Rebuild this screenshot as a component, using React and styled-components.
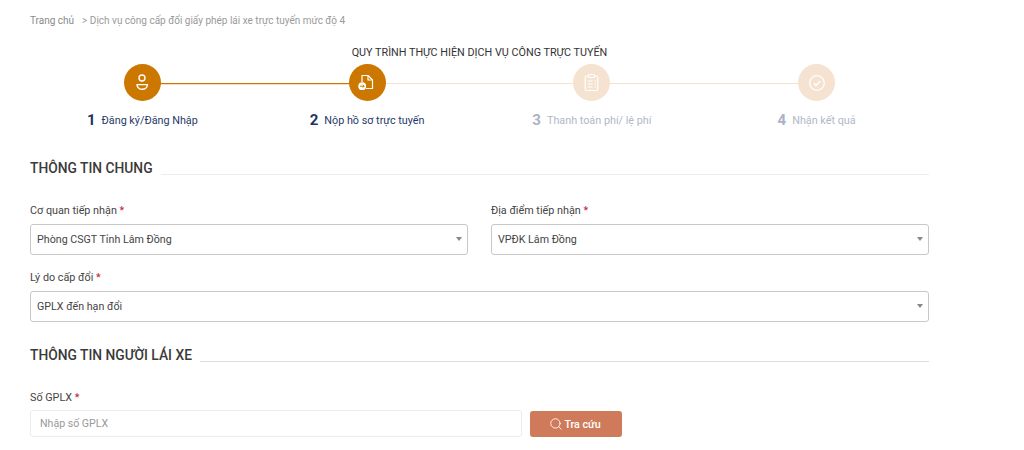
import styled, { createGlobalStyle } from 'styled-components';
import { Search } from 'lucide-react';

const GlobalStyle = createGlobalStyle`
    html, body {
        margin: 0;
        padding: 0;
        background: #fff;
        overflow: hidden;
    }
    * {
        box-sizing: border-box;
    }
`;

const Page = styled.div`
    width: 1024px;
    height: 450px;
    padding: 15px 95px 0 30px;
    font-family: Roboto, "Liberation Sans", sans-serif;
    overflow: hidden;
`;

const Breadcrumb = styled.div`
    display: flex;
    height: 12px;
    line-height: 12px;
    font-size: 10px;
    color: #8a8a8a;
    & span {
        margin-left: 8px;
        color: #9a9a9a;
    }
`;

const ProcessTitle = styled.div`
    margin-top: 19px;
    text-align: center;
    font-size: 10.8px;
    line-height: 14px;
    color: #333;
`;

const Steps = styled.div`
    display: grid;
    grid-template-columns: repeat(4, 1fr);
    margin-top: 4px;
`;

const Step = styled.div`
    position: relative;
    display: flex;
    flex-direction: column;
    align-items: center;

    &:not(:last-child)::after {
        content: "";
        position: absolute;
        top: 19px;
        left: 50%;
        width: 100%;
        height: 1px;
        background: ${(p) => (p.$lineOn ? '#cc7700' : '#f5e2d0')};
        box-shadow: ${(p) => (p.$lineOn ? '0 1px 0 #f3dcc0' : 'none')};
    }
`;

const Circle = styled.div`
    position: relative;
    z-index: 1;
    width: 37px;
    height: 37px;
    border-radius: 50%;
    display: flex;
    align-items: center;
    justify-content: center;
    background: ${(p) => (p.$on ? '#cc7700' : '#f5e2d0')};
`;

const StepLabel = styled.div`
    display: flex;
    align-items: center;
    height: 20px;
    margin-top: 9px;
    font-size: 10.8px;
    color: ${(p) => (p.$on ? '#1f3a68' : '#b0b8c8')};
`;

const StepNumber = styled.span`
    font-size: 15px;
    font-weight: 700;
    margin-right: 6px;
    color: ${(p) => (p.$on ? '#1c3461' : '#a9b3c6')};
`;

const SectionHead = styled.div`
    display: flex;
    align-items: flex-end;
    margin-top: ${(p) => p.$top}px;
    gap: 8px;
`;

const SectionTitle = styled.div`
    font-size: 13.8px;
    line-height: 17px;
    font-weight: 500;
    color: #3a3a3a;
    white-space: nowrap;
`;

const SectionLine = styled.div`
    flex: 1;
    height: 1px;
    margin-bottom: 2px;
    background: ${(p) => (p.$dark ? '#dcdcdc' : '#ececec')};
`;

const Row = styled.div`
    display: grid;
    grid-template-columns: ${(p) => (p.$two ? '438px 438px' : '1fr')};
    justify-content: space-between;
    margin-top: ${(p) => p.$top}px;
`;

const Label = styled.div`
    font-size: 10.8px;
    line-height: 14px;
    height: 14px;
    margin-bottom: ${(p) => (p.$tight ? 5 : 6)}px;
    color: #444;
    & b {
        font-weight: 400;
        color: #c0202a;
    }
`;

const SelectWrap = styled.div`
    position: relative;
    height: 31px;

    &::after {
        content: "";
        position: absolute;
        top: 13px;
        right: 6px;
        border-left: 3px solid transparent;
        border-right: 3px solid transparent;
        border-top: 4px solid #888;
    }
`;

const Select = styled.select`
    appearance: none;
    width: 100%;
    height: 100%;
    padding: 0 20px 0 6px;
    border: 1px solid #c8c8c8;
    border-radius: 3px;
    background: #fff;
    font-family: inherit;
    font-size: 10.7px;
    color: #444;
    outline: none;
`;

const SearchRow = styled.div`
    display: flex;
    align-items: flex-start;
    gap: 8px;
`;

const Input = styled.input`
    width: 492px;
    height: 27px;
    padding: 0 9px;
    border: 1px solid #ececec;
    border-radius: 3px;
    font-family: inherit;
    font-size: 10.6px;
    color: #444;
    outline: none;
    &::placeholder {
        color: #999;
        opacity: 1;
    }
`;

const Button = styled.button`
    display: flex;
    align-items: center;
    justify-content: center;
    gap: 1px;
    width: 92px;
    height: 26px;
    margin-top: 1px;
    padding: 0 2px 0 0;
    border: 0;
    border-radius: 3px;
    background: #cf7a5a;
    color: #fff;
    font-family: inherit;
    font-size: 10.7px;
    font-weight: 500;
`;

const UserIcon = () => (
    <svg width="17" height="17" viewBox="0 0 17 17" fill="none" stroke="#fff" strokeWidth="1.4">
        <circle cx="8" cy="4" r="3" />
        <path d="M3 10.600h10.400c0 2.600-2.300 4.700-5.200 4.700S3 13.200 3 10.600z" />
    </svg>
);

const FileIcon = () => (
    <svg width="20" height="20" viewBox="0 0 20 20" fill="none">
        <path d="M5 9V2.500h6l4.500 4.500v8.500H9" stroke="#fff" strokeWidth="1.200" strokeLinejoin="round" />
        <path d="M11 2.500V7h4.500" stroke="#fff" strokeWidth="1.200" strokeLinejoin="round" />
        <circle cx="5.200" cy="13.200" r="3.900" fill="#fff" />
        <path d="M3 13.200h4.200M5.800 11.800l1.400 1.400-1.400 1.400" stroke="#cc7700" strokeWidth="1" />
    </svg>
);

const ClipboardIcon = () => (
    <svg width="17" height="19" viewBox="0 0 17 19" fill="none" stroke="#fff" strokeWidth="1.200">
        <rect x="2.200" y="3" width="12.600" height="14.500" rx="1.500" />
        <rect x="5.500" y="1.500" width="6" height="3" rx="1" fill="#f5e2d0" />
        <path d="M4.500 8h5M11.500 8h1.500M4.500 11h5M11.500 11h1.500M4.500 14h5M11.500 14h1.500" />
    </svg>
);

const CheckIcon = () => (
    <svg width="18" height="18" viewBox="0 0 18 18" fill="none" stroke="#fff" strokeWidth="1.300">
        <circle cx="9" cy="9" r="7.300" />
        <path d="M5.800 9.300l2.200 2.100 4.200-4.300" strokeWidth="1.500" />
    </svg>
);

const steps = [
    { n: 1, text: 'Đăng ký/Đăng Nhập', icon: <UserIcon />, on: true, lineOn: true },
    { n: 2, text: 'Nộp hồ sơ trực tuyến', icon: <FileIcon />, on: true },
    { n: 3, text: 'Thanh toán phí/ lệ phí', icon: <ClipboardIcon /> },
    { n: 4, text: 'Nhận kết quả', icon: <CheckIcon /> },
];

const App = () => {
    return (
        <Page>
            <GlobalStyle />
            <Breadcrumb>
                Trang chủ <span>&gt; Dịch vụ công cấp đổi giấy phép lái xe trực tuyến mức độ 4</span>
            </Breadcrumb>
            <ProcessTitle>QUY TRÌNH THỰC HIỆN DỊCH VỤ CÔNG TRỰC TUYẾN</ProcessTitle>
            <Steps>
                {steps.map((s) => (
                    <Step key={s.n} $lineOn={s.lineOn}>
                        <Circle $on={s.on}>{s.icon}</Circle>
                        <StepLabel $on={s.on}>
                            <StepNumber $on={s.on}>{s.n}</StepNumber>
                            {s.text}
                        </StepLabel>
                    </Step>
                ))}
            </Steps>

            <SectionHead $top={30}>
                <SectionTitle>THÔNG TIN CHUNG</SectionTitle>
                <SectionLine />
            </SectionHead>
            <Row $two $top={27}>
                <div>
                    <Label>Cơ quan tiếp nhận <b>*</b></Label>
                    <SelectWrap>
                        <Select defaultValue="a"><option value="a">Phòng CSGT Tỉnh Lâm Đồng</option></Select>
                    </SelectWrap>
                </div>
                <div>
                    <Label>Địa điểm tiếp nhận <b>*</b></Label>
                    <SelectWrap>
                        <Select defaultValue="a"><option value="a">VPĐK Lâm Đồng</option></Select>
                    </SelectWrap>
                </div>
            </Row>
            <Row $top={16}>
                <div>
                    <Label>Lý do cấp đổi <b>*</b></Label>
                    <SelectWrap>
                        <Select defaultValue="a"><option value="a">GPLX đến hạn đổi</option></Select>
                    </SelectWrap>
                </div>
            </Row>

            <SectionHead $top={25}>
                <SectionTitle>THÔNG TIN NGƯỜI LÁI XE</SectionTitle>
                <SectionLine $dark />
            </SectionHead>
            <Row $top={27}>
                <div>
                    <Label $tight>Số GPLX <b>*</b></Label>
                    <SearchRow>
                        <Input placeholder="Nhập số GPLX" />
                        <Button><Search size={14} strokeWidth={1.5} /> Tra cứu</Button>
                    </SearchRow>
                </div>
            </Row>
        </Page>
    );
};

export default App;
